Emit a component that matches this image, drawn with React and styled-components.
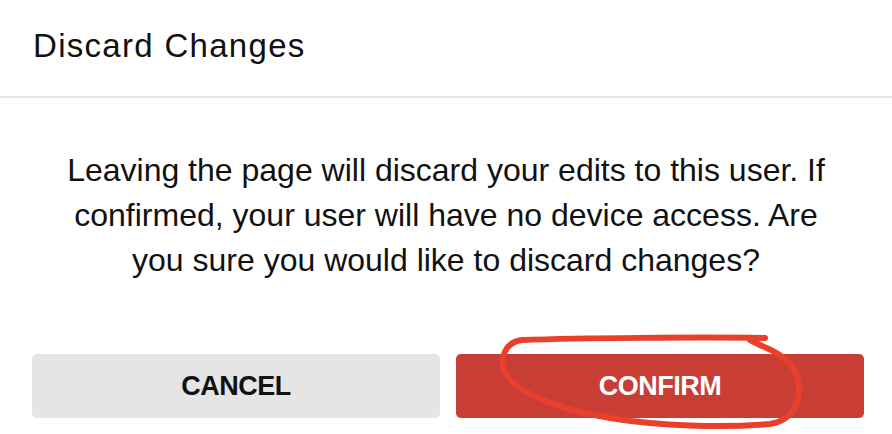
import React from 'react';
import styled, { createGlobalStyle } from 'styled-components';

const GlobalStyle = createGlobalStyle`
  html, body {
    margin: 0;
    padding: 0;
    background: #ffffff;
    font-family: "Liberation Sans", Arial, sans-serif;
  }
`;

const Dialog = styled.div`
  position: relative;
  width: 892px;
  height: 434px;
  background: #ffffff;
  overflow: hidden;
`;

const Header = styled.div`
  height: 98px;
  display: flex;
  align-items: center;
  padding: 0 33px 4px;
  border-bottom: 2px solid #e5e5e5;
  box-sizing: border-box;
`;

const Title = styled.h2`
  margin: 0;
  font-size: 33px;
  letter-spacing: 1.3px;
  font-weight: 400;
  color: #111111;
`;

const Body = styled.p`
  margin: 0;
  padding: 50px 60px 0;
  text-align: center;
  font-size: 32px;
  line-height: 45px;
  color: #111111;
`;

const Footer = styled.div`
  display: grid;
  grid-template-columns: 1fr 1fr;
  gap: 16px;
  padding: 0 28px 0 32px;
  margin-top: 71px;
`;

const Button = styled.button`
  height: 64px;
  border: none;
  border-radius: 5px;
  font-family: "Liberation Sans", Arial, sans-serif;
  font-size: 27px;
  letter-spacing: -0.5px;
  font-weight: 700;
  text-transform: uppercase;
  background: ${p => (p.$primary ? '#c83d34' : '#e5e5e5')};
  color: ${p => (p.$primary ? '#ffffff' : '#111111')};
  cursor: pointer;
`;

const Scribble = styled.svg`
  position: absolute;
  left: 0;
  top: 0;
  pointer-events: none;
`;

export default function App() {
  return (
    <>
      <GlobalStyle />
      <Dialog>
        <Header>
          <Title>Discard Changes</Title>
        </Header>
        <Body>
          Leaving the page will discard your edits to this user. If confirmed, your user will have no device access. Are you sure you would like to discard changes?
        </Body>
        <Footer>
          <Button>Cancel</Button>
          <Button $primary>Confirm</Button>
        </Footer>
        <Scribble width="892" height="434" viewBox="0 0 892 434">
          <path
            d="M765 338 C700 337 580 338 522 340 C505 342 500 358 504 370 C512 392 560 410 610 418 C660 426 720 428 770 424 C795 420 800 400 799 385 C798 368 785 355 762 346 L750 340"
            fill="none"
            stroke="#e8402a"
            strokeWidth="6"
            strokeLinecap="round"
            strokeLinejoin="round"
          />
        </Scribble>
      </Dialog>
    </>
  );
}
